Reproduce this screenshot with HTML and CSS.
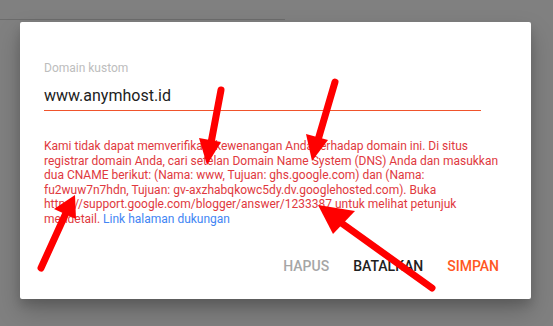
FILE: index.html
```html
<!DOCTYPE html>
<html lang="id">
<head>
<meta charset="utf-8">
<title>Domain kustom</title>
<link rel="stylesheet" href="styles.css">
</head>
<body>
<div class="page">
  <div class="topbar"></div>
  <div class="dialog">
    <div class="field">
      <div class="label">Domain kustom</div>
      <div class="input">www.anymhost.id</div>
    </div>
    <p class="error">Kami tidak dapat memverifikasi kewenangan Anda terhadap domain ini. Di situs registrar domain Anda, cari setelan Domain Name System (DNS) Anda dan masukkan dua CNAME berikut: (Nama: www, Tujuan: ghs.google.com) dan (Nama: fu2wuw7n7hdn, Tujuan: gv-axzhabqkowc5dy.dv.googlehosted.com). Buka https://support.google.com/blogger/answer/1233387 untuk melihat petunjuk mendetail. <a class="link" href="#">Link halaman dukungan</a></p>
    <div class="actions">
      <button class="btn btn-delete">Hapus</button>
      <button class="btn btn-cancel">Batalkan</button>
      <button class="btn btn-save">Simpan</button>
    </div>
  </div>
  <svg class="arrows" width="553" height="326" viewBox="0 0 553 326">
    <g stroke="#ff0000" stroke-width="7" stroke-linecap="round" fill="none">
      <line x1="41" y1="268" x2="66" y2="213"/>
      <line x1="221" y1="90" x2="211" y2="143"/>
      <line x1="335" y1="82" x2="318" y2="140"/>
      <line x1="432" y1="288" x2="340" y2="222"/>
    </g>
    <g fill="#ff0000">
      <polygon points="75,195 76,219 54,209"/>
      <polygon points="207,165 221,142 199,138"/>
      <polygon points="312,161 328,140 306,134"/>
      <polygon points="318,205 355,211 333,234"/>
    </g>
  </svg>
</div>
</body>
</html>
```
FILE: styles.css
```css
html, body {
  margin: 0;
  padding: 0;
}
body {
  background: #808080;
  font-family: Roboto, "Noto Sans", Arial, sans-serif;
}
.page {
  position: relative;
  width: 553px;
  height: 326px;
  overflow: hidden;
  padding-top: 19px;
  box-sizing: border-box;
}
.topbar {
  width: 285px;
  height: 1px;
  background: #6c6c6c;
}
.dialog {
  margin: 2px 0 0 20px;
  width: 511px;
  height: 277px;
  box-sizing: border-box;
  background: #ffffff;
  border-radius: 2px;
  box-shadow: 0 12px 24px rgba(0,0,0,0.22), 0 6px 10px rgba(0,0,0,0.12);
  padding: 39px 24px 0 24px;
  display: flex;
  flex-direction: column;
}
.field {
  width: 437px;
  display: flex;
  flex-direction: column;
}
.label {
  font-size: 12px;
  line-height: 14px;
  color: #bdbdbd;
}
.input {
  margin-top: 11px;
  font-size: 16px;
  line-height: 19px;
  color: #212121;
  padding-bottom: 5px;
  border-bottom: 1px solid #f0542c;
}
.error {
  margin: 28px 0 0 0;
  width: 456px;
  font-size: 12px;
  line-height: 14.5px;
  color: #e0393e;
}
.link {
  color: #4285f4;
  text-decoration: none;
}
.actions {
  margin-top: 22px;
  display: flex;
  justify-content: flex-end;
  gap: 8px;
}
.btn {
  background: none;
  border: none;
  font-family: Roboto, "Noto Sans", Arial, sans-serif;
  font-size: 14px;
  font-weight: 500;
  text-transform: uppercase;
  height: 36px;
  padding: 0 8px;
  cursor: pointer;
}
.btn-delete { color: #a6a6a6; }
.btn-cancel { color: #212121; }
.btn-save { color: #ff5722; }
.arrows {
  position: absolute;
  left: 0;
  top: 0;
}
```
